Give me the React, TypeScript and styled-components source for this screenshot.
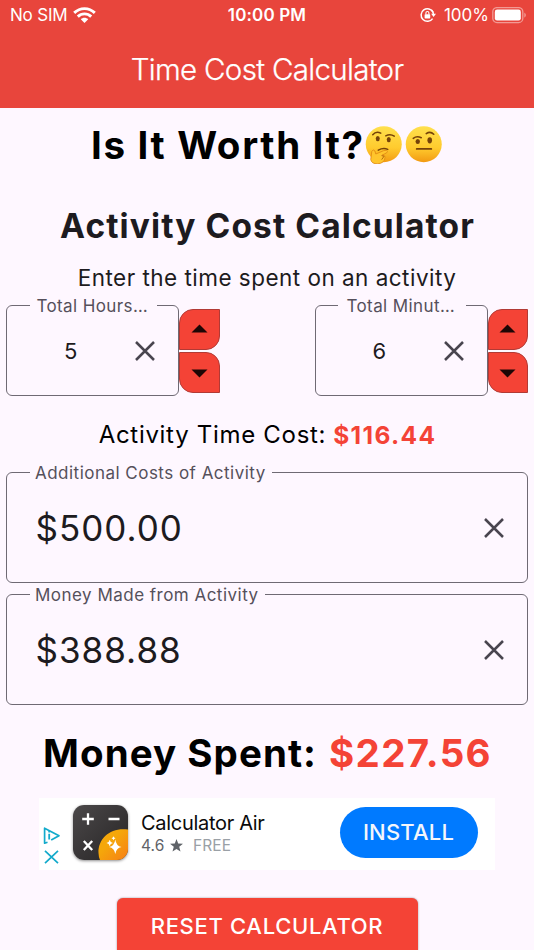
import React from 'react';
import styled, { createGlobalStyle } from 'styled-components';

const GlobalStyle = createGlobalStyle`
  *, *::before, *::after { box-sizing: border-box; }
  html, body { margin: 0; padding: 0; background: #fef7ff; }
  body { font-family: Inter, "Liberation Sans", sans-serif; overflow: hidden; }
`;

const Screen = styled.div`
  width: 534px;
  height: 950px;
  overflow: hidden;
  display: flex;
  flex-direction: column;
  background: #fef7ff;
  color: #1d1b20;
  white-space: nowrap;
`;

const Header = styled.header`
  height: 108px;
  flex: none;
  background: #e8453c;
  color: #fff;
`;

const StatusBar = styled.div`
  height: 30px;
  padding: 0 8px 0 10px;
  display: grid;
  grid-template-columns: 1fr auto 1fr;
  align-items: center;
  font-size: 17px;
  line-height: 30px;
`;

const StatusGroup = styled.div<{ $end?: boolean }>`
  display: flex;
  align-items: center;
  gap: ${(p) => (p.$end ? '7px' : '6px')};
  justify-content: ${(p) => (p.$end ? 'flex-end' : 'flex-start')};
`;

const Carrier = styled.span`
  letter-spacing: -0.2px;
`;

const Clock = styled.time`
  margin-right: 2px;
  font-weight: 600;
  letter-spacing: 0.15px;
`;

const BatteryLevel = styled.span`
  display: flex;
  align-items: center;
  gap: 3px;
`;

const AppTitle = styled.h1`
  margin: 0;
  height: 78px;
  line-height: 79px;
  text-align: center;
  font-size: 29.5px;
  font-weight: 300;
  letter-spacing: -0.68px;
  -webkit-text-stroke: 0.25px #fff;
`;

const Question = styled.h2`
  margin: 0;
  height: 74px;
  flex: none;
  display: flex;
  align-items: center;
  padding-left: 91px;
  font-size: 38.5px;
  font-weight: 700;
  letter-spacing: 1.68px;
  color: #000;
`;

const Emojis = styled.span`
  display: flex;
  gap: 3px;
`;

const SectionTitle = styled.h3`
  margin: 14px 0 0;
  height: 60px;
  flex: none;
  line-height: 60px;
  padding-left: 1px;
  text-align: center;
  font-size: 33.5px;
  font-weight: 700;
  letter-spacing: 1.1px;
`;

const Hint = styled.p`
  margin: 0;
  height: 40px;
  flex: none;
  padding-top: 3px;
  line-height: 38px;
  text-align: center;
  font-size: 22.5px;
  letter-spacing: 0.48px;
`;

const SpinnerRow = styled.div`
  display: flex;
  justify-content: space-between;
  flex: none;
  padding: 0 6px;
`;

const Spinner = styled.div`
  display: flex;
`;

const Outline = styled.fieldset<{ $compact?: boolean }>`
  margin: 0;
  min-width: 0;
  flex: none;
  width: ${(p) => (p.$compact ? '173px' : '522px')};
  height: ${(p) => (p.$compact ? '100px' : '120px')};
  padding: 0 0 0 22.5px;
  border: 1px solid #6f6a74;
  border-radius: 6px;
`;

const Label = styled.legend<{ $compact?: boolean }>`
  width: ${(p) => (p.$compact ? '127.5px' : 'auto')};
  padding: ${(p) => (p.$compact ? '2px 7px 0 5px' : '2px 6.5px 0 5.5px')};
  font-size: 17px;
  line-height: 17px;
  letter-spacing: ${(p) => (p.$compact ? '0.4px' : '0.48px')};
  color: #55505b;
`;

const LabelText = styled.span`
  display: block;
  text-align: center;
`;

const FieldBody = styled.div<{ $compact?: boolean }>`
  height: ${(p) => (p.$compact ? '72px' : '92px')};
  display: flex;
  align-items: center;
`;

const Value = styled.span<{ $compact?: boolean }>`
  flex: 1;
  font-size: ${(p) => (p.$compact ? '22px' : '35px')};
  letter-spacing: ${(p) => (p.$compact ? '0' : '1px')};
  text-align: ${(p) => (p.$compact ? 'center' : 'left')};
  padding-left: ${(p) => (p.$compact ? '0' : '6px')};
`;

const ClearButton = styled.button`
  width: 66px;
  height: 48px;
  flex: none;
  padding: 0;
  border: 0;
  background: none;
  display: flex;
  align-items: center;
  justify-content: center;
`;

const StepButtons = styled.div`
  padding-top: 13px;
  display: flex;
  flex-direction: column;
  gap: 2px;
`;

const StepButton = styled.button`
  width: 40.5px;
  height: 41px;
  padding: 0 0 2px;
  display: flex;
  align-items: center;
  justify-content: center;
  border: 1px solid #b23a35;
  border-radius: 14px 0 14px 0;
  background: #f44336;
`;

const StepDownButton = styled(StepButton)`
  padding: 2px 0 0;
  border-radius: 0 14px 0 14px;
`;

const Fields = styled.div`
  display: flex;
  flex-direction: column;
  flex: none;
  gap: 2px;
  padding: 0 6px;
`;

const Result = styled.p<{ $large?: boolean }>`
  margin: 0;
  flex: none;
  height: ${(p) => (p.$large ? '93px' : '67px')};
  padding-top: ${(p) => (p.$large ? '3px' : '10px')};
  padding-left: 1px;
  display: flex;
  align-items: center;
  justify-content: center;
  gap: ${(p) => (p.$large ? '12px' : '7px')};
  font-size: ${(p) => (p.$large ? '38.5px' : '24px')};
  font-weight: ${(p) => (p.$large ? 700 : 400)};
  letter-spacing: ${(p) => (p.$large ? '1.05px' : '0.7px')};
  color: #000;
`;

const Amount = styled.strong<{ $large?: boolean }>`
  font-weight: 700;
  font-size: ${(p) => (p.$large ? '38.5px' : '24.5px')};
  letter-spacing: 1.35px;
  color: #f44336;
`;

const AdBanner = styled.aside`
  width: 455.5px;
  height: 71.5px;
  flex: none;
  margin-left: 39px;
  padding: 0 17px 0 4px;
  display: flex;
  align-items: center;
  background: #fff;
`;

const AdMarks = styled.div`
  width: 30px;
  padding-top: 24px;
  display: flex;
  flex-direction: column;
  gap: 5px;
`;

const AppIcon = styled.div`
  width: 55px;
  height: 55px;
  margin-bottom: 3px;
  border-radius: 11px;
  box-shadow: 0 1px 3px rgba(0, 0, 0, 0.45);
  overflow: hidden;
`;

const AdText = styled.div`
  flex: 1;
  padding: 0 0 1px 13px;
`;

const AdName = styled.div`
  font-size: 20px;
  line-height: 24px;
  letter-spacing: -0.3px;
  color: #0b0b0b;
`;

const AdMeta = styled.div`
  display: flex;
  align-items: center;
  font-size: 15.5px;
  line-height: 21px;
  letter-spacing: 0.1px;
  color: #5f6368;
`;

const Price = styled.span`
  margin-left: 10px;
  color: #9aa0a6;
`;

const InstallButton = styled.button`
  width: 138px;
  height: 51.5px;
  margin-bottom: 3px;
  padding: 0;
  border: 0;
  border-radius: 26px;
  background: #007aff;
  color: #f4f6fb;
  font: 500 22px Inter, sans-serif;
  letter-spacing: 0.2px;
`;

const ResetButton = styled.button`
  width: 301px;
  height: 57px;
  flex: none;
  align-self: center;
  margin-top: 28px;
  padding: 0;
  border: 0;
  border-radius: 6px;
  background: #f44336;
  box-shadow: 0 0 2px rgba(0, 0, 0, 0.45);
  color: #fff;
  font: 500 22px Inter, sans-serif;
  letter-spacing: 0.68px;
`;

const WifiIcon = () => (
  <svg width="23" height="17" viewBox="0 0 23 17" fill="none" stroke="#fff" strokeWidth="2.9">
    <path d="M1.2 5.900C7 .2 16 .2 21.800 5.900" />
    <path d="M4.800 9.600C8.600 5.900 14.400 5.900 18.200 9.600" />
    <path d="M11.500 16L7.800 12.200C9.900 10.200 13.100 10.200 15.200 12.200Z" fill="#fff" stroke="none" />
  </svg>
);

const RotationLockIcon = () => (
  <svg width="17" height="16" viewBox="0 0 17 16" fill="none" stroke="#fff" strokeWidth="1.500">
    <path d="M13.100 5.300A6.300 6.300 0 1 0 12.600 11.600" />
    <path d="M11.100 6.800H16L13.600 9.900Z" fill="#fff" stroke="none" />
    <path d="M13.500 7.600A6.300 6.300 0 0 0 11.700 3.300" />
    <rect x="4.600" y="7.200" width="5.600" height="4.300" rx=".7" fill="#fff" stroke="none" />
    <path d="M5.900 7.500V6a1.500 1.500 0 0 1 3 0v1.500" strokeWidth="1.100" />
  </svg>
);

const BatteryIcon = () => (
  <svg width="34" height="17" viewBox="0 0 34 17">
    <rect x=".8" y=".6" width="30" height="15" rx="4.200" fill="none" stroke="#f29a94" strokeWidth="1.300" />
    <rect x="2.800" y="2.600" width="26" height="11" rx="2.300" fill="#fff" />
    <path d="M32.300 5.500q1.600 1 1.600 2.600t-1.600 2.600z" fill="#f29a94" />
  </svg>
);

const CloseIcon = () => (
  <svg width="20" height="20" viewBox="0 0 20 20">
    <path d="M1 1L19 19M19 1L1 19" stroke="#49454f" strokeWidth="2.500" />
  </svg>
);

const Arrow = ({ down }: { down?: boolean }) => (
  <svg width="17" height="9" viewBox="0 0 17 9">
    <path d={down ? 'M.5 .5H16.500L8.500 8.500Z' : 'M.5 8.500H16.500L8.500 .5Z'} fill="#1d0605" />
  </svg>
);

const FaceGradient = ({ id }: { id: string }) => (
  <defs>
    <linearGradient id={id} x1="0" y1="0" x2="0" y2="1">
      <stop offset="0" stopColor="#ffe04e" />
      <stop offset=".6" stopColor="#ffcb2e" />
      <stop offset="1" stopColor="#f29a12" />
    </linearGradient>
  </defs>
);

const ThinkingFace = () => (
  <svg width="37.500" height="38" viewBox="0 0 37 38" role="img" aria-label="Thinking face">
    <FaceGradient id="thinking" />
    <circle cx="18.500" cy="18.200" r="18" fill="url(#thinking)" />
    <g fill="none" stroke="#754209" strokeLinecap="round">
      <path d="M7.500 8.700Q11 4.600 15.500 7.200" strokeWidth="1.500" />
      <path d="M20.500 9.800Q25 7.500 29 10.200" strokeWidth="1.500" />
      <path d="M13 24.200Q18 21.500 22.500 23.400" strokeWidth="1.500" />
    </g>
    <ellipse cx="12.500" cy="12.600" rx="2" ry="2.700" fill="#754209" />
    <ellipse cx="23.500" cy="13.600" rx="2" ry="2.700" fill="#754209" />
    <path
      d="M6.500 25.500Q8 22.500 9.700 25L10.500 28L18.500 24.600Q22 23.600 22.200 25.600Q22 27 19 28L17 29Q20.500 29.500 19.800 31.500Q19.300 37.200 12.500 37.800Q6.300 38 5.500 33.500Z"
      fill="#ffc52c"
      stroke="#e28c14"
      strokeWidth=".9"
    />
    <path d="M16.300 29.600L18.800 30.300L16.400 33.600" fill="none" stroke="#b96a0d" strokeWidth="1" />
  </svg>
);

const SkepticalFace = () => (
  <svg width="37.500" height="38" viewBox="0 0 37 38" role="img" aria-label="Face with raised eyebrow">
    <FaceGradient id="skeptical" />
    <circle cx="18.500" cy="18.200" r="18" fill="url(#skeptical)" />
    <g fill="none" stroke="#754209" strokeLinecap="round">
      <path d="M8 12.300Q11.500 9.500 16 11.700" strokeWidth="1.600" />
      <path d="M21 7.600Q25 4.800 28.500 8.200" strokeWidth="1.600" />
      <path d="M11.500 22.900H26" strokeWidth="1.900" />
    </g>
    <ellipse cx="12.500" cy="15.400" rx="2.200" ry="2.500" fill="#754209" />
    <ellipse cx="24.500" cy="14.300" rx="2.300" ry="3.100" fill="#754209" />
  </svg>
);

const CalculatorLogo = () => (
  <svg width="55" height="55" viewBox="0 0 55 55">
    <defs>
      <linearGradient id="plate" x1="0" y1="0" x2="1" y2="1">
        <stop offset="0" stopColor="#4b4849" />
        <stop offset="1" stopColor="#262425" />
      </linearGradient>
      <linearGradient id="orb" x1="0" y1="0" x2="1" y2="1">
        <stop offset=".4" stopColor="#f5a70a" />
        <stop offset="1" stopColor="#f77f16" />
      </linearGradient>
    </defs>
    <rect width="55" height="55" fill="url(#plate)" />
    <path d="M55 24.500C38 22 25 33 25.500 48Q25.600 52 27 55H55Z" fill="url(#orb)" />
    <path d="M15 8.200V19.800M9.200 14H20.800M35.500 14H46.500M10.800 36L19.200 45M19.200 36L10.800 45" stroke="#fff" strokeWidth="2.300" />
    <path d="M42.300 34.500Q43.200 41 48.500 42Q43.200 43 42.300 49Q41.400 43 36 42Q41.400 41 42.300 34.500Z" fill="#fff" />
    <path d="M36.700 34.700Q37.200 37.500 40 38Q37.200 38.500 36.700 41.300Q36.200 38.500 33.500 38Q36.200 37.500 36.700 34.700Z" fill="#fff" />
    <path d="M40.500 31.300Q40.800 33 42.500 33.300Q40.800 33.600 40.500 35.300Q40.200 33.600 38.500 33.300Q40.200 33 40.500 31.300Z" fill="#fff" />
  </svg>
);

const AdChoicesIcon = () => (
  <svg width="18" height="18" viewBox="0 0 18 18" fill="none" stroke="#12aacb">
    <path d="M4.500 15.200L1.600 16.200V1.200L16 8.700L8.200 13" strokeWidth="1.700" strokeLinejoin="round" />
    <path d="M6.200 6.800V12.600M6.200 4V5.600" strokeWidth="1.800" />
  </svg>
);

const AdCloseIcon = () => (
  <svg width="18" height="14" viewBox="0 0 18 14">
    <path d="M2 .8L15 13.200M15 .8L2 13.200" stroke="#12aacb" strokeWidth="1.700" />
  </svg>
);

const Star = styled.svg`
  margin-left: 5.5px;
`;

const RatingStar = () => (
  <Star width="13" height="13" viewBox="0 0 13 13">
    <path d="M6.500 0L8.200 4.600L13 4.800L9.200 7.800L10.500 12.600L6.500 9.900L2.500 12.600L3.800 7.800L0 4.800L4.800 4.600Z" fill="#5f6368" />
  </Star>
);

interface FieldProps {
  label: string;
  value: string;
  compact?: boolean;
}

const Field = ({ label, value, compact }: FieldProps) => (
  <Outline $compact={compact}>
    <Label $compact={compact}>
      <LabelText>{label}</LabelText>
    </Label>
    <FieldBody $compact={compact}>
      <Value $compact={compact}>{value}</Value>
      <ClearButton aria-label="Clear">
        <CloseIcon />
      </ClearButton>
    </FieldBody>
  </Outline>
);

const NumberSpinner = ({ label, value }: FieldProps) => (
  <Spinner>
    <Field label={label} value={value} compact />
    <StepButtons>
      <StepButton aria-label="Increase">
        <Arrow />
      </StepButton>
      <StepDownButton aria-label="Decrease">
        <Arrow down />
      </StepDownButton>
    </StepButtons>
  </Spinner>
);

export default function App() {
  return (
    <>
      <GlobalStyle />
      <Screen>
        <Header>
          <StatusBar>
            <StatusGroup>
              <Carrier>No SIM</Carrier>
              <WifiIcon />
            </StatusGroup>
            <Clock>10:00 PM</Clock>
            <StatusGroup $end>
              <RotationLockIcon />
              <BatteryLevel>
                <span>100%</span>
                <BatteryIcon />
              </BatteryLevel>
            </StatusGroup>
          </StatusBar>
          <AppTitle>Time Cost Calculator</AppTitle>
        </Header>

        <Question>
          <span>Is It Worth It?</span>
          <Emojis>
            <ThinkingFace />
            <SkepticalFace />
          </Emojis>
        </Question>

        <SectionTitle>Activity Cost Calculator</SectionTitle>
        <Hint>Enter the time spent on an activity</Hint>

        <SpinnerRow>
          <NumberSpinner label="Total Hours…" value="5" />
          <NumberSpinner label="Total Minut…" value="6" />
        </SpinnerRow>

        <Result>
          <span>Activity Time Cost:</span>
          <Amount>$116.44</Amount>
        </Result>

        <Fields>
          <Field label="Additional Costs of Activity" value="$500.00" />
          <Field label="Money Made from Activity" value="$388.88" />
        </Fields>

        <Result $large>
          <span>Money Spent:</span>
          <Amount $large>$227.56</Amount>
        </Result>

        <AdBanner>
          <AdMarks>
            <AdChoicesIcon />
            <AdCloseIcon />
          </AdMarks>
          <AppIcon>
            <CalculatorLogo />
          </AppIcon>
          <AdText>
            <AdName>Calculator Air</AdName>
            <AdMeta>
              4.6
              <RatingStar />
              <Price>FREE</Price>
            </AdMeta>
          </AdText>
          <InstallButton>INSTALL</InstallButton>
        </AdBanner>

        <ResetButton>RESET CALCULATOR</ResetButton>
      </Screen>
    </>
  );
}
